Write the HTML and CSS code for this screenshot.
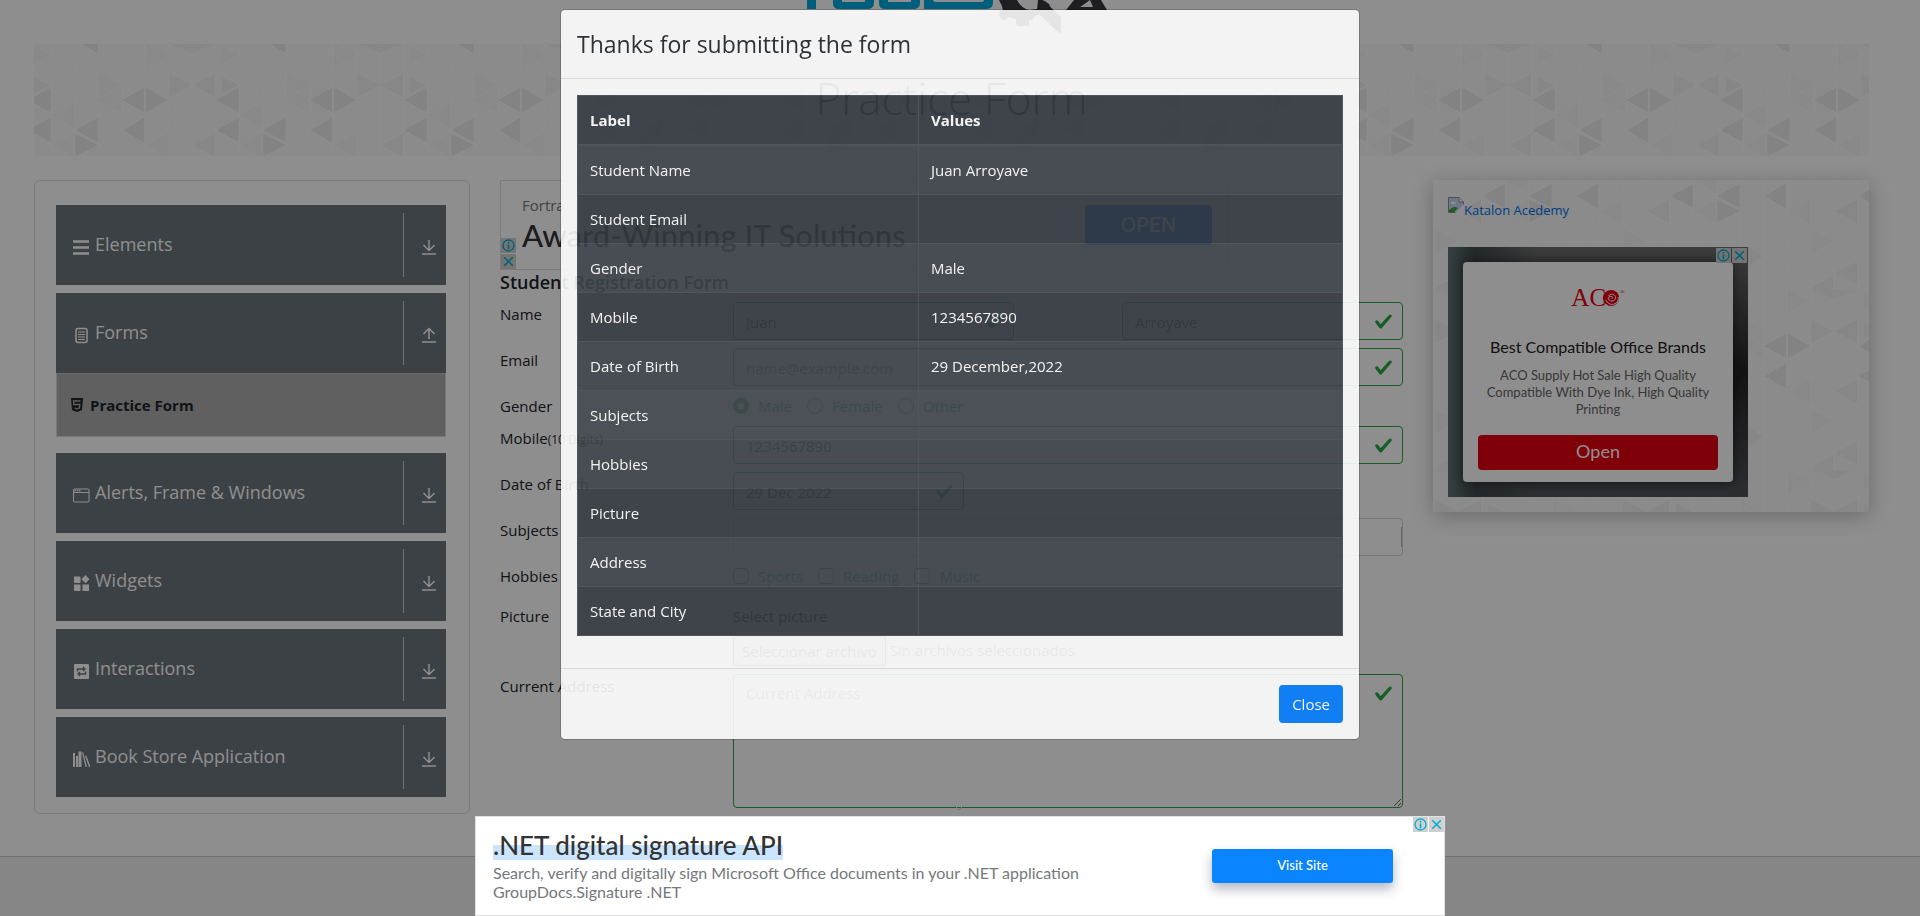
FILE: index.html
```html
<!DOCTYPE html>
<html lang="en">
<head>
<meta charset="utf-8">
<title>Practice Form</title>
<meta name="viewport" content="width=device-width, initial-scale=1">
<link rel="stylesheet" href="styles.css">
</head>
<body>
<svg class="sprite" aria-hidden="true">
  <symbol id="arrow-down" viewBox="0 0 16 16"><path d="M8 1v10M2.500 6L8 11.500 13.500 6M1 15h14" fill="none" stroke="currentColor" stroke-width="1.500"/></symbol>
  <symbol id="arrow-up" viewBox="0 0 16 16"><path d="M8 12V1.500M2.500 7L8 1.500 13.500 7M1 15h14" fill="none" stroke="currentColor" stroke-width="1.500"/></symbol>
  <symbol id="ad-info" viewBox="0 0 15 15"><circle cx="7.500" cy="7.500" r="5.500" fill="none" stroke="#00aecd" stroke-width="1.300"/><path d="M7.500 4v1.400M7.500 6.500v4.700" stroke="#00aecd" stroke-width="1.600"/></symbol>
  <symbol id="ad-close" viewBox="0 0 15 15"><path d="M3.200 3.200l8.600 8.600M11.800 3.200l-8.600 8.600" stroke="#00aecd" stroke-width="1.500"/></symbol>
</svg>

<div class="page">
  <header class="logo-bar">
    <svg class="logo" viewBox="0 0 310 34" aria-label="Tools QA logo" role="img">
      <g fill="#00a9e0">
        <rect x="6" y="0" width="9" height="9"/>
        <path d="M32 0v3q0 6 6 6h28q7 0 7-6V0h-9v2H41V0z"/>
        <path d="M78 0v3q0 6 6 6h28q7 0 7-6V0h-9v2H87V0z"/>
        <path d="M123 0v9h61q8 0 8-6V0h-9q0 2-3 2h-44q-4 0-4-2z"/>
      </g>
      <g fill="#36363a">
        <path d="M203 0h13q4 8 12 10l8-1 8-8 5 4-4 7 14 10v12l-21-20-5 3-1 3h-4v5q-1 1-3 1h-8q-2 0-2-4v-3l-8-2-3 3q-3 1-5-3l-1-5 4-2q-1-5-4-10z"/>
        <path d="M237 0h5l18 17v16l-24-23z"/>
        <path d="M273 0h16l-14 10h-10z"/>
        <path d="M289 0h11l6 10h-34l2-3h18z"/>
      </g>
    </svg>
  </header>

  <div class="banner"><h1>Practice Form</h1></div>

  <main class="columns">
    <nav class="side">
      <div class="group"><button class="group-head" type="button">
        <svg class="g-icon" viewBox="0 0 18 18"><path d="M1 3.500h16M1 9.500h16M1 15.500h16" stroke="currentColor" stroke-width="2.600"/></svg>
        <span>Elements</span><i><svg><use href="#arrow-down"/></svg></i></button></div>
      <div class="group"><button class="group-head" type="button">
        <svg class="g-icon" viewBox="0 0 18 18"><rect x="4" y="2.500" width="11" height="14" rx="2" fill="none" stroke="currentColor" stroke-width="1.500"/><path d="M6 6h7M6 8.500h7M6 11h7M6 13.500h7" stroke="currentColor"/></svg>
        <span>Forms</span><i><svg><use href="#arrow-up"/></svg></i></button>
        <a class="sub" href="#form">
          <svg viewBox="0 0 14 14"><path d="M1 0h12l-1 12-5 2-5-2z" fill="currentColor"/><path d="M10.500 3h-7l.3 3.500h6l-.4 3.500-2.400.8-2.400-.8" fill="none" stroke="#acacac" stroke-width="1.300"/></svg>
          <span>Practice Form</span></a></div>
      <div class="group"><button class="group-head" type="button">
        <svg class="g-icon" viewBox="0 0 18 18"><rect x="1.500" y="3" width="15.500" height="13" rx="1" fill="none" stroke="currentColor"/><path d="M1.500 6.500H17" stroke="currentColor"/><path d="M2.500 4.500h6" stroke="currentColor" stroke-width="1.500" stroke-dasharray="1.500 .7"/></svg>
        <span>Alerts, Frame &amp; Windows</span><i><svg><use href="#arrow-down"/></svg></i></button></div>
      <div class="group"><button class="group-head" type="button">
        <svg class="g-icon" viewBox="0 0 18 18"><path d="M2 2.500h6.500V9H2zM2 10.500h6.500V17H2zM10.500 10.500H17V17h-6.500zM13.500 1L17.500 5.200 13.500 9.200 9.500 5.200z" fill="currentColor"/></svg>
        <span>Widgets</span><i><svg><use href="#arrow-down"/></svg></i></button></div>
      <div class="group"><button class="group-head" type="button">
        <svg class="g-icon" viewBox="0 0 18 18"><rect x="2" y="2" width="15" height="15" rx="1" fill="currentColor"/><path d="M5.500 9.500V7H12M11 5l2 2-2 2M13.500 9.500V12H7M8 10l-2 2 2 2" fill="none" stroke="#6c757d" stroke-width="1.400"/></svg>
        <span>Interactions</span><i><svg><use href="#arrow-down"/></svg></i></button></div>
      <div class="group"><button class="group-head" type="button">
        <svg class="g-icon" viewBox="0 0 18 18"><path d="M1 3h2v14H1zM4 6h2v11H4zM6.500 1.500h3V17h-3zM10 2.500l1.200-.3L15 17h-1.400zM13 6l1.400-.4L18.500 17H17z" fill="currentColor"/></svg>
        <span>Book Store Application</span><i><svg><use href="#arrow-down"/></svg></i></button></div>
    </nav>

    <section class="middle">
      <div class="ad-top">
        <div><p>Fortra</p><h2>Award-Winning IT Solutions</h2></div>
        <a class="ad-open" href="#open">OPEN</a>
        <div class="ad-marks ad-marks-left"><svg><use href="#ad-info"/></svg><svg><use href="#ad-close"/></svg></div>
      </div>
      <h5>Student Registration Form</h5>
      <form id="form" class="form">
        <div class="row">
          <label for="first">Name</label>
          <div class="two">
            <input class="text ok" id="first" type="text" value="Juan">
            <input class="text ok" aria-label="Last Name" type="text" value="Arroyave">
          </div>
        </div>
        <div class="row"><label for="email">Email</label><input class="text ok" id="email" type="email" placeholder="name@example.com"></div>
        <div class="row"><span>Gender</span>
          <div class="checks">
            <label><input type="radio" name="gender" checked>Male</label>
            <label><input type="radio" name="gender">Female</label>
            <label><input type="radio" name="gender">Other</label>
          </div></div>
        <div class="row"><label for="mobile">Mobile<small>(10 Digits)</small></label><input class="text ok" id="mobile" type="text" value="1234567890"></div>
        <div class="row"><label for="dob">Date of Birth</label><input class="text ok dob" id="dob" type="text" value="29 Dec 2022"></div>
        <div class="row"><label for="subjects">Subjects</label><input class="text subjects" id="subjects" type="text"></div>
        <div class="row hobbies"><span>Hobbies</span>
          <div class="checks">
            <label><input type="checkbox">Sports</label>
            <label><input type="checkbox">Reading</label>
            <label><input type="checkbox">Music</label>
          </div></div>
        <div class="row"><span>Picture</span>
          <div class="picture"><label for="file">Select picture</label>
            <div class="file"><label class="file-button" for="file">Seleccionar archivo</label><span>Sin archivos seleccionados</span><input class="hidden-file" id="file" type="file"></div>
          </div></div>
        <div class="row"><label for="address">Current Address</label><textarea class="text ok" id="address" placeholder="Current Address"></textarea></div>
      </form>
    </section>

    <aside class="right">
      <a class="katalon" href="#katalon"><svg viewBox="0 0 16 16"><path d="M.5.500h10.500l4.500 4.500v10.500H.5z" fill="#c3d8f8" stroke="#8c8c8c"/><path d="M11 .5V5h4.500" fill="#fff" stroke="#8c8c8c"/><path d="M3 6q1-2 3-1 2 0 2 2H3z" fill="#fff"/><path d="M1 15v-2q5-5 9-2l-4 4z" fill="#3fa33a"/><path d="M7 16l9-9v9z" fill="#fbfbfb"/></svg>Katalon Acedemy</a>
      <div class="ad-side">
        <div class="ad-card">
          <div class="aco">AC<svg viewBox="0 0 20 20"><circle cx="10" cy="10" r="9" fill="#e60012"/><path d="M4 12q3 6 9 5 6-2 5-8M7 8q3-4 7-1 3 3-1 6-4 2-6-2 0-3 3-3 3 1 1 3M3 17l3 1M16 16l2-3" fill="none" stroke="#fff" stroke-width="1.100"/></svg><sup>®</sup></div>
          <h3>Best Compatible Office Brands</h3>
          <p>ACO Supply Hot Sale High Quality Compatible With Dye Ink, High Quality Printing</p>
          <a class="ad-red" href="#open">Open</a>
        </div>
        <div class="ad-marks ad-marks-right"><svg><use href="#ad-info"/></svg><svg><use href="#ad-close"/></svg></div>
      </div>
    </aside>
  </main>
</div>
<footer class="page-footer"></footer>

<div class="backdrop"></div>

<div class="modal" role="dialog" aria-labelledby="modal-title">
  <div class="modal-head"><h4 id="modal-title">Thanks for submitting the form</h4></div>
  <div class="modal-body">
    <table>
      <thead><tr><th>Label</th><th>Values</th></tr></thead>
      <tbody>
        <tr><td>Student Name</td><td>Juan Arroyave</td></tr>
        <tr><td>Student Email</td><td></td></tr>
        <tr><td>Gender</td><td>Male</td></tr>
        <tr><td>Mobile</td><td>1234567890</td></tr>
        <tr><td>Date of Birth</td><td>29 December,2022</td></tr>
        <tr class="hovered"><td>Subjects</td><td></td></tr>
        <tr><td>Hobbies</td><td></td></tr>
        <tr><td>Picture</td><td></td></tr>
        <tr><td>Address</td><td></td></tr>
        <tr><td>State and City</td><td></td></tr>
      </tbody>
    </table>
  </div>
  <div class="modal-foot"><button type="button">Close</button></div>
</div>

<div class="ad-bottom">
  <svg class="ad-caret" viewBox="0 0 10 6"><path d="M1 1l4 4 4-4" fill="none" stroke="#777"/></svg>
  <div class="ad-text"><h2>.NET digital signature API</h2>
    <p>Search, verify and digitally sign Microsoft Office documents in your .NET application GroupDocs.Signature .NET</p></div>
  <a class="visit" href="#visit">Visit Site</a>
  <div class="ad-marks ad-marks-right"><svg><use href="#ad-info"/></svg><svg><use href="#ad-close"/></svg></div>
</div>
</body>
</html>
```
FILE: styles.css
```css
:root {
  --tiles: url("data:image/svg+xml,%3Csvg xmlns='http://www.w3.org/2000/svg' width='188' height='180'%3E%3Crect width='188' height='180' fill='%23f9f9f9'/%3E%3Cg fill='%23ebebeb'%3E%3Cpath d='M-6 56L17 44V68zM182 56L205 44V68zM-6 86L17 74V98zM182 86L205 74V98zM41 86L64 74V98zM41 90L64 101 41 112zM88 56L110 44V68zM112 44L134 56 112 68zM88 86L110 74V98zM47 0H64V9z'/%3E%3C/g%3E%3Cg fill='%23f2f2f2'%3E%3Cpath d='M135 30L157 41 135 53zM181 30V53L159 41zM181 90V113L159 101zM135 0H181L158 9zM71 136L87 147 71 158zM157 166V190L135 178zM181 152V175L159 163zM0 34L16 41 0 49z'/%3E%3C/g%3E%3Cg fill='%23f6f6f6'%3E%3Cpath d='M64 56L87 44V68zM18 101L40 90V113zM112 101L134 90V113zM0 3L16 11 0 19zM65 30L87 41 65 53zM112 0V22L134 11zM18 71L40 60V83zM135 120L157 131 135 143z'/%3E%3C/g%3E%3Cpath d='M17 0V180M41 0V180M64 0V180M88 0V180M111 0V180M135 0V180M158 0V180M182 0V180' stroke='%23fff' stroke-opacity='.5'/%3E%3Cg fill='none' stroke='%23fff' stroke-opacity='.6'%3E%3Cpath d='M-6 -4L182 116M-6 26L182 146M-6 56L182 176M-6 86L141 180M-6 116L94 180M-6 146L47 180M41 -4L188 90M88 -4L188 60M135 -4L188 30M-6 26L41 -4M-6 56L88 -4M-6 86L135 -4M-6 116L182 -4M-6 146L188 23M-6 176L188 53M35 180L188 83M82 180L188 113M129 180L188 143'/%3E%3C/g%3E%3C/svg%3E");
  --check: url("data:image/svg+xml,%3Csvg xmlns='http://www.w3.org/2000/svg' viewBox='0 0 8 8'%3E%3Cpath fill='%2328a745' d='M2.3 6.730L.6 4.530c-.4-1.040.46-1.400 1.100-.8l1.100 1.400 3.400-3.800c.6-.63 1.600-.27 1.200.7l-4 4.600c-.43.5-.8.4-1.100.1z'/%3E%3C/svg%3E");
}
* { box-sizing: border-box; }
body {
  margin: 0; min-height: 100vh; overflow: hidden; display: flex; flex-direction: column;
  background: #fff; color: #212529; font: 400 15px/24px "Open Sans", "Noto Sans", sans-serif;
}
h1, h2, h3, h4, h5, p { margin: 0; font-weight: 400; }
a { text-decoration: none; }
button, input, textarea { font: inherit; color: inherit; }
.sprite { position: absolute; width: 0; height: 0; }

.page { padding: 0 51px 42px 34px; }
.logo-bar { height: 44px; padding-left: 8px; display: flex; justify-content: center; align-items: flex-start; }
.logo { width: 310px; height: 34px; }
.banner { height: 112px; padding-bottom: 4px; background: var(--tiles); display: flex; justify-content: center; align-items: center; }
.banner h1 { font-size: 44px; line-height: 56px; font-weight: 300; color: #444; }
.columns { margin-top: 24px; display: grid; grid-template-columns: minmax(0, 436fr) minmax(0, 903fr) minmax(0, 436fr); gap: 30px; align-items: start; }

/* accordion */
.side { border: 1px solid #dcdcdc; border-radius: 6px; padding: 24px 23px 16px 21px; display: flex; flex-direction: column; gap: 8px; }
.group-head {
  width: 100%; height: 80px; border: 0; padding: 8px 0 8px 16px; background: #6c757d; color: #fff;
  display: flex; align-items: center; gap: 5px; text-align: left; font-size: 18px;
}
.group-head .g-icon { width: 18px; height: 18px; margin-top: 4px; }
.group-head span { flex: 1; padding-bottom: 2px; }
.group-head i { width: 43px; height: 64px; border-left: 1px solid #ccc; display: flex; align-items: center; justify-content: center; padding: 4px 0 0 8px; }
.group-head i svg { width: 16px; height: 16px; }
.sub { height: 64px; margin-bottom: 8px; padding-left: 13px; border: 1px solid #dcdcdc; border-top-color: #bbb; background: #acacac; color: #212529; font-weight: 700; font-size: 15px; display: flex; align-items: center; gap: 6px; }
.sub svg { width: 14px; height: 14px; }

/* top advert */
.ad-top { position: relative; width: 728px; max-width: 100%; height: 90px; border: 1px solid #ddd; padding: 10px 15px 0 21px; display: flex; justify-content: space-between; }
.ad-top p { font-size: 15px; color: #777; line-height: 28px; }
.ad-top h2 { font-size: 31px; line-height: 32px; color: #333; font-weight: 500; font-family: Lato, sans-serif; }
.ad-open { margin-top: 14px; width: 127px; height: 40px; border-radius: 4px; background: #006fd6; color: #fff; font: 500 20px/40px Inter, sans-serif; text-align: center; }
.ad-marks { position: absolute; display: flex; gap: 1px; }
.ad-marks svg { width: 15px; height: 15px; background: #d0d0d0; }
.ad-marks-left { left: 0; bottom: 0; flex-direction: column; }
.ad-marks-right { right: 1px; top: 1px; }

/* form */
.middle h5 { font-size: 18px; font-weight: 600; line-height: 24px; margin-bottom: 8px; }
.form { display: flex; flex-direction: column; gap: 8px; }
.row { display: grid; grid-template-columns: 233fr 670fr; align-items: start; }
.row small { font-size: 12px; }
.text { width: 100%; height: 38px; border: 1px solid #ced4da; border-radius: 4px; padding: 6px 38px 4px 12px; background: #fff; color: #495057; outline: 0; }
.text::placeholder { color: #6c757d; }
.ok { border-color: #28a745; background: #fff var(--check) right 9px center / 19px 19px no-repeat; }
.subjects { background: #fff linear-gradient(#bbb, #bbb) right center / 1px 20px no-repeat; }
.two { display: grid; grid-template-columns: 281fr 281fr; gap: 108px; }
.dob { width: 231px; }
textarea.text { display: block; height: 134px; background-position: right 9px top 9px; }
.checks { display: flex; gap: 15px; color: #28a745; }
.checks label { display: flex; align-items: center; gap: 9px; }
.checks input { appearance: none; width: 16px; height: 16px; margin: 0; border: 1px solid #28a745; border-radius: 4px; }
.checks input[type="radio"] { border-radius: 50%; }
.checks input:checked { border: 5px solid #28a745; }
.hobbies { padding-bottom: 8px; }
.picture > label { display: block; line-height: 24px; margin-bottom: 8px; }
.file { position: relative; display: flex; gap: 4px; line-height: 28px; color: #555; }
.file-button { height: 30px; padding: 0 8px; border: 1px solid #777; border-radius: 2px; background: #efefef; }
.hidden-file { position: absolute; opacity: 0; width: 1px; height: 1px; }

/* right panel */
.right { background: var(--tiles) 55px 110px; box-shadow: 0 4px 20px rgba(0, 0, 0, .25); padding: 15px; }
.katalon { display: flex; height: 52px; align-items: flex-start; color: #0070f0; font-size: 13px; line-height: 30px; }
.katalon svg { width: 16px; height: 16px; margin-top: 2px; }
.ad-side { position: relative; width: 300px; max-width: 100%; padding: 15px; background: linear-gradient(90deg, #5f7376 0, #40494c 9%, transparent 30%), linear-gradient(#6e6e6e, #222 50%, #52545c); }
.ad-card { height: 220px; border-radius: 4px; background: #fff; padding: 20px 15px 12px; text-align: center; box-shadow: 0 0 12px rgba(0, 0, 0, .5); font-family: Lato, sans-serif; display: flex; flex-direction: column; }
.aco { display: flex; justify-content: center; align-items: center; height: 32px; color: #e60012; font: 400 25px/32px "Liberation Serif", serif; }
.aco svg { width: 18px; height: 18px; margin-left: -4px; }
.aco sup { font-size: 6px; line-height: 8px; align-self: flex-start; margin-top: 6px; }
.ad-card h3 { margin-top: 21px; font-size: 16px; line-height: 24px; color: #212121; }
.ad-card p { margin-top: 8px; font-size: 13px; line-height: 17px; color: #666; }
.ad-red { margin-top: auto; height: 35px; border-radius: 4px; background: #e60012; color: #fff; font-size: 18px; line-height: 33px; }

.page-footer { flex: 1; border-top: 1px solid #ccc; background: #f1f1f1; }
.backdrop { position: fixed; inset: 0; background: #000; opacity: .442; }

/* dialog, caught part way through its fade */
.modal { position: fixed; left: 50%; top: 9px; transform: translateX(-50%); width: 800px; max-width: 100%; background: #fff; background-clip: padding-box; border: 1px solid rgba(0, 0, 0, .2); border-radius: 5px; opacity: .885; }
.modal-head { padding: 16px; border-bottom: 1px solid #dee2e6; }
.modal-head h4 { font-size: 23px; line-height: 36px; font-weight: 500; }
.modal-body { padding: 16px; }
.modal table { width: 100%; margin-bottom: 16px; border-collapse: collapse; border: 1px solid #454d55; background: #343a42; color: #fff; }
.modal th, .modal td { height: 49px; padding: 12px; border: 1px solid #454d55; text-align: left; line-height: 24px; }
.modal th { font-weight: 700; border-bottom-width: 2px; }
.modal th:first-child { width: 341px; }
.modal tbody tr:nth-of-type(odd) { background: rgba(255, 255, 255, .05); }
.modal tbody tr.hovered { background: rgba(245, 255, 225, .08); }
.modal-foot { padding: 16px; border-top: 1px solid #dee2e6; display: flex; justify-content: flex-end; }
.modal-foot button { height: 38px; padding: 0 13px; border: 0; border-radius: 4px; background: #007bff; color: #fff; }

/* bottom advert */
.ad-bottom { position: fixed; left: 50%; bottom: 0; transform: translateX(-50%); width: 970px; max-width: 100%; height: 100px; background: #fff; border: 1px solid #e2e2e2; padding: 13px 51px 0 17px; display: flex; justify-content: space-between; font-family: Lato, sans-serif; }
.ad-bottom .ad-marks { right: 0; top: 0; }
.ad-caret { position: absolute; left: 478px; top: -12px; width: 10px; height: 6px; }
.ad-text { width: 610px; }
.ad-text h2 { display: inline-block; font-size: 26px; line-height: 30px; font-weight: 500; color: #333; background: linear-gradient(transparent 50%, #cce5ff 50%); }
.ad-text p { margin-top: 2px; font-size: 16px; line-height: 19px; color: #75787c; }
.visit { margin-top: 19px; width: 181px; height: 34px; border-radius: 3px; background: #0a85ff; color: #fff; font-size: 13px; font-weight: 500; line-height: 33px; text-align: center; box-shadow: 0 6px 12px rgba(40, 50, 80, .35); }
```
